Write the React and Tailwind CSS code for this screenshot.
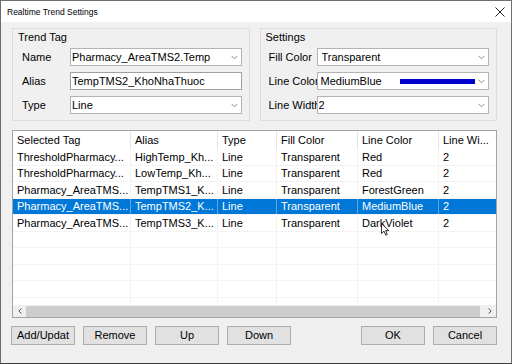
import React from "react";

function Chevron() {
  return (
    <svg width="7" height="5" viewBox="0 0 7 5" className="shrink-0">
      <path d="M0.5 0.8 L3.5 3.8 L6.5 0.8" fill="none" stroke="#8a8a8a" strokeWidth="1" />
    </svg>
  );
}

function Combo({ children, pl = "pl-[1px]", extra }) {
  return (
    <div className={`flex h-[18px] w-[172px] shrink-0 items-center border border-[#b4b4b4] bg-white pr-[3px] ${pl}`}>
      {extra ? (
        <>
          <span className="w-[79px] shrink-0 overflow-hidden whitespace-nowrap">{children}</span>
          <div className="h-[5px] w-[75px] shrink-0 bg-[#0000cd]" />
          <div className="flex-1" />
        </>
      ) : (
        <span className="flex-1 overflow-hidden whitespace-nowrap">{children}</span>
      )}
      <Chevron />
    </div>
  );
}

function Row({ label, children }) {
  return (
    <div className="flex h-[18px] items-center">
      <span className="w-[48px] shrink-0 overflow-hidden whitespace-nowrap">{label}</span>
      {children}
    </div>
  );
}

const cols = ["w-[118px]", "w-[87px]", "w-[59px]", "w-[81px]", "w-[81px]", "flex-1"];
const headers = ["Selected Tag", "Alias", "Type", "Fill Color", "Line Color", "Line Wi..."];
const rows = [
  ["ThresholdPharmacy...", "HighTemp_Kh...", "Line", "Transparent", "Red", "2"],
  ["ThresholdPharmacy...", "LowTemp_Kh...", "Line", "Transparent", "Red", "2"],
  ["Pharmacy_AreaTMS...", "TempTMS1_K...", "Line", "Transparent", "ForestGreen", "2"],
  ["Pharmacy_AreaTMS...", "TempTMS2_K...", "Line", "Transparent", "MediumBlue", "2"],
  ["Pharmacy_AreaTMS...", "TempTMS3_K...", "Line", "Transparent", "DarkViolet", "2"],
  ["", "", "", "", "", ""],
  ["", "", "", "", "", ""],
  ["", "", "", "", "", ""],
  ["", "", "", "", "", ""],
  ["", "", "", "", "", ""],
];

function Btn({ children }) {
  return (
    <div className="flex h-[19px] w-[64px] items-center justify-center border border-[#adadad] bg-[#e1e1e1]">
      {children}
    </div>
  );
}

export default function App() {
  return (
    <div className="relative flex h-[364px] w-[512px] flex-col border border-[#707070] border-b-[#3c3c3c] border-l-[#6a6a6a] bg-[#f0f0f0] font-['Liberation_Sans',Arial,sans-serif] text-[11px] leading-[13px] text-black">
      {/* title bar */}
      <div className="flex h-[21px] shrink-0 items-center justify-between bg-white pl-[6px] pr-[6px]">
        <span className="text-[8.5px] leading-[10px]">Realtime Trend Settings</span>
        <svg width="10" height="10" viewBox="0 0 10 10">
          <path d="M0.5 0.5 L9.5 9.5 M9.5 0.5 L0.5 9.5" stroke="#222" strokeWidth="1" />
        </svg>
      </div>

      <div className="flex flex-1 flex-col pl-[11px] pr-[14px] pt-[6px]">
        {/* groups */}
        <div className="grid h-[93px] grid-cols-2 gap-[10px]">
          <div className="flex flex-col border border-[#dcdcdc] pl-[9px]">
            <span className="-ml-[4px] mt-[2px]">Trend Tag</span>
            <div className="mt-[4px] flex flex-col gap-[6px]">
              <Row label="Name">
                <Combo>Pharmacy_AreaTMS2.Temp</Combo>
              </Row>
              <Row label="Alias">
                <div className="flex h-[18px] w-[172px] shrink-0 items-center border border-[#a0a0a0] bg-white pl-[1px]">
                  TempTMS2_KhoNhaThuoc
                </div>
              </Row>
              <Row label="Type">
                <Combo>Line</Combo>
              </Row>
            </div>
          </div>
          <div className="flex flex-col border border-[#dcdcdc] pl-[8px]">
            <span className="-ml-[3px] mt-[2px]">Settings</span>
            <div className="mt-[4px] flex flex-col gap-[6px]">
              <Row label="Fill Color">
                <Combo pl="pl-[4px]">Transparent</Combo>
              </Row>
              <Row label="Line Color">
                <Combo pl="pl-[3px]" extra>
                  MediumBlue
                </Combo>
              </Row>
              <Row label="Line Width">
                <Combo pl="pl-[1px]">2</Combo>
              </Row>
            </div>
          </div>
        </div>

        {/* list view */}
        <div className="mt-[9px] flex h-[188px] flex-col border border-[#a3a3a3] bg-white">
          <div className="flex h-[18px] shrink-0">
            {headers.map((h, i) => (
              <div
                key={i}
                className={`${cols[i]} flex shrink-0 items-center overflow-hidden whitespace-nowrap pl-[4px] pt-[1px] ${i < 5 ? "border-r border-[#e5e5e5]" : ""}`}
              >
                {h}
              </div>
            ))}
          </div>
          <div className="flex-1 overflow-hidden">
            {rows.map((r, ri) => {
              const sel = ri === 3;
              return (
                <div
                  key={ri}
                  className={`flex h-[16.5px] border-b border-[#f3f3f3] ${sel ? "bg-[#0078d7] text-white" : ""}`}
                >
                  {r.map((c, ci) => (
                    <div
                      key={ci}
                      className={`${cols[ci]} flex shrink-0 items-center overflow-hidden whitespace-nowrap pl-[4px] pt-[1px] ${ci < 5 ? (sel ? "border-r border-[#5ea6e6]" : "border-r border-[#f3f3f3]") : ""}`}
                    >
                      {c}
                    </div>
                  ))}
                </div>
              );
            })}
          </div>
          <div className="flex h-[12px] shrink-0 items-center bg-[#f0f0f0]">
            <div className="flex w-[13px] justify-center">
              <svg width="4" height="6" viewBox="0 0 4 6">
                <path d="M3.5 0.5 L0.8 3 L3.5 5.5" fill="none" stroke="#555" strokeWidth="1" />
              </svg>
            </div>
            <div className="mr-[3px] h-[11px] flex-1 bg-[#cdcdcd]" />
            <div className="flex w-[13px] justify-center">
              <svg width="4" height="6" viewBox="0 0 4 6">
                <path d="M0.5 0.5 L3.2 3 L0.5 5.5" fill="none" stroke="#555" strokeWidth="1" />
              </svg>
            </div>
          </div>
        </div>

        {/* buttons */}
        <div className="-ml-[1px] mt-[8px] flex items-center justify-between">
          <div className="flex gap-[8px]">
            <Btn>Add/Updat</Btn>
            <Btn>Remove</Btn>
            <Btn>Up</Btn>
            <Btn>Down</Btn>
          </div>
          <div className="flex gap-[8px]">
            <Btn>OK</Btn>
            <Btn>Cancel</Btn>
          </div>
        </div>
      </div>

      {/* mouse cursor */}
      <svg className="absolute left-[380px] top-[222px]" width="9" height="13" viewBox="0 0 9 13">
        <path d="M0.5 0.5 L0.5 10.5 L3 8.2 L4.8 12.2 L6.3 11.5 L4.6 7.6 L7.8 7.6 Z" fill="#fff" stroke="#000" strokeWidth="0.8" />
      </svg>
    </div>
  );
}
